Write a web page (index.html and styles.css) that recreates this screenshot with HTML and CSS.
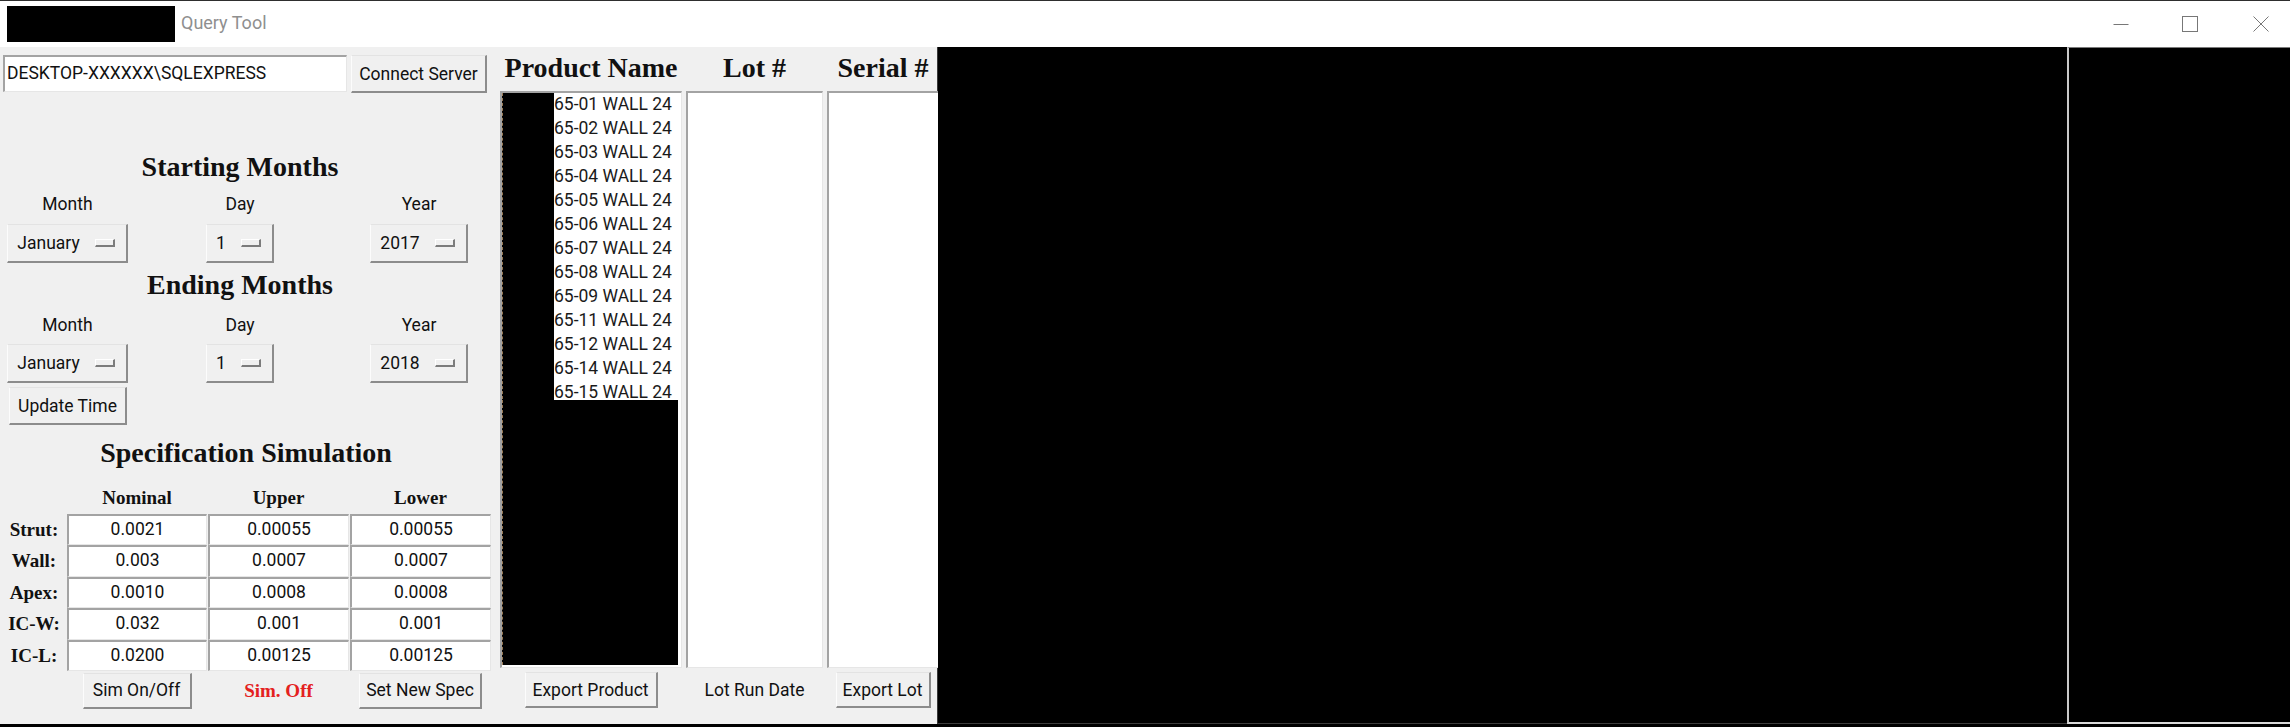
FILE: index.html
```html
<!DOCTYPE html>
<html lang="en">
<head>
<meta charset="utf-8">
<title>Query Tool</title>
<link rel="stylesheet" href="styles.css">
</head>
<body>
<div class="window">
  <header class="titlebar">
    <div class="redact-title"></div>
    <div class="title">Query Tool</div>
    <div class="controls">
      <div class="ctl"><svg width="16" height="16" viewBox="0 0 16 16"><path d="M0.5 8.5H15.5" stroke="#777" stroke-width="1" fill="none"/></svg></div>
      <div class="ctl"><svg width="16" height="16" viewBox="0 0 16 16"><rect x="0.5" y="0.5" width="15" height="15" stroke="#777" stroke-width="1" fill="none"/></svg></div>
      <div class="ctl ctl-close"><svg width="16" height="16" viewBox="0 0 16 16"><path d="M0.5 0.5L15.5 15.5M15.5 0.5L0.5 15.5" stroke="#777" stroke-width="1" fill="none"/></svg></div>
    </div>
  </header>

  <main class="main">
    <section class="left">
      <div class="server-row">
        <div class="field server-field">DESKTOP-XXXXXX\SQLEXPRESS</div>
        <div class="btn connect-btn">Connect Server</div>
      </div>

      <h2 class="heading heading-start">Starting Months</h2>
      <div class="dates">
        <div class="lbl">Month</div><div class="lbl">Day</div><div class="lbl">Year</div>
        <div class="opt"><span>January</span><i class="ind"></i></div>
        <div class="opt"><span>1</span><i class="ind"></i></div>
        <div class="opt"><span>2017</span><i class="ind"></i></div>
      </div>

      <h2 class="heading heading-end">Ending Months</h2>
      <div class="dates dates-end">
        <div class="lbl">Month</div><div class="lbl">Day</div><div class="lbl">Year</div>
        <div class="opt"><span>January</span><i class="ind"></i></div>
        <div class="opt"><span>1</span><i class="ind"></i></div>
        <div class="opt"><span>2018</span><i class="ind"></i></div>
      </div>
      <div class="btn update-btn">Update Time</div>

      <h2 class="heading heading-spec">Specification Simulation</h2>
      <div class="spec">
        <div></div><div class="colh">Nominal</div><div class="colh">Upper</div><div class="colh">Lower</div>
        <div class="rowh">Strut:</div><div class="field cell">0.0021</div><div class="field cell">0.00055</div><div class="field cell">0.00055</div>
        <div class="rowh">Wall:</div><div class="field cell">0.003</div><div class="field cell">0.0007</div><div class="field cell">0.0007</div>
        <div class="rowh">Apex:</div><div class="field cell">0.0010</div><div class="field cell">0.0008</div><div class="field cell">0.0008</div>
        <div class="rowh">IC-W:</div><div class="field cell">0.032</div><div class="field cell">0.001</div><div class="field cell">0.001</div>
        <div class="rowh">IC-L:</div><div class="field cell">0.0200</div><div class="field cell">0.00125</div><div class="field cell">0.00125</div>
        <div></div>
        <div class="cellc"><div class="btn sim-btn">Sim On/Off</div></div>
        <div class="cellc"><div class="sim-state">Sim. Off</div></div>
        <div class="cellc"><div class="btn sim-btn">Set New Spec</div></div>
      </div>
    </section>

    <section class="lists">
      <h2 class="lhead">Product Name</h2>
      <h2 class="lhead">Lot #</h2>
      <h2 class="lhead">Serial #</h2>

      <div class="field listbox product-box">
        <div class="items-row">
          <div class="redact redact-strip"></div>
          <ul class="items">
            <li>65-01 WALL 24</li>
            <li>65-02 WALL 24</li>
            <li>65-03 WALL 24</li>
            <li>65-04 WALL 24</li>
            <li>65-05 WALL 24</li>
            <li>65-06 WALL 24</li>
            <li>65-07 WALL 24</li>
            <li>65-08 WALL 24</li>
            <li>65-09 WALL 24</li>
            <li>65-11 WALL 24</li>
            <li>65-12 WALL 24</li>
            <li>65-14 WALL 24</li>
            <li>65-15 WALL 24</li>
          </ul>
        </div>
        <div class="redact redact-block"></div>
      </div>
      <div class="field listbox"></div>
      <div class="field listbox"></div>

      <div class="cellc"><div class="btn export-btn">Export Product</div></div>
      <div class="cellc"><div class="plain">Lot Run Date</div></div>
      <div class="cellc"><div class="btn export-btn">Export Lot</div></div>
    </section>

    <section class="canvas">
      <div class="canvas-main"></div>
      <div class="canvas-side"></div>
    </section>
  </main>
  <div class="bottom-edge"></div>
</div>
</body>
</html>
```
FILE: styles.css
```css
* { box-sizing: border-box; }
html, body { margin: 0; padding: 0; }
body {
  width: 2290px;
  height: 727px;
  overflow: hidden;
  background: #000;
  font-family: Roboto, "Liberation Sans", sans-serif;
  font-size: 17.5px;
  color: #000;
}
.window { width: 2290px; height: 727px; display: flex; flex-direction: column; }

/* title bar */
.titlebar {
  height: 47px;
  flex: 0 0 47px;
  background: #fff;
  border-top: 1px solid #2e2e2e;
  display: flex;
  align-items: flex-start;
}
.redact-title { width: 168px; height: 36px; margin: 5px 0 0 7px; background: #000; }
.title { margin: 10px 0 0 6px; font-size: 18px; line-height: 24px; color: #8f8f8f; }
.controls { margin-left: auto; display: flex; height: 46px; }
.ctl { width: 69px; height: 46px; display: flex; align-items: center; justify-content: center; padding-bottom: 1px; }
.ctl svg { display: block; }
.ctl-close { width: 66px; justify-content: flex-start; padding-left: 29px; }

/* main */
.main { flex: 0 0 677px; height: 677px; display: flex; }

/* common widgets */
.field {
  background: #fff;
  border-style: solid;
  border-width: 2px 1px 1px 2px;
  border-color: #a3a3a3 #e6e6e6 #e6e6e6 #a3a3a3;
}
.btn {
  display: flex;
  align-items: center;
  justify-content: center;
  background: #f0f0f0;
  border-style: solid;
  border-width: 1px 2px 2px 1px;
  border-color: #e3e3e3 #8c8c8c #8c8c8c #fcfcfc;
  white-space: nowrap;
  color: #111;
}
.cellc { display: flex; justify-content: center; align-items: flex-start; }

/* left panel */
.left {
  width: 497px;
  flex: 0 0 497px;
  background: #f0f0f0;
  display: flex;
  flex-direction: column;
}
.server-row { display: flex; gap: 4px; margin: 8px 0 0 3px; height: 38px; }
.server-field { width: 344px; height: 37px; padding-left: 2px; line-height: 33px; color: #111; white-space: nowrap; }
.connect-btn { width: 136px; height: 38px; }

.heading {
  margin: 0;
  font-family: "Liberation Serif", "Times New Roman", serif;
  font-weight: bold;
  font-size: 28px;
  line-height: 32px;
  text-align: center;
  color: #111;
}
.heading-start { margin-top: 58px; width: 480px; }
.heading-end { margin-top: 6px; width: 480px; }
.heading-spec { margin-top: 12px; width: 492px; }

.dates {
  display: grid;
  grid-template-columns: 135px 210px 148px;
  grid-template-rows: 24px 39px;
  row-gap: 8px;
  margin-top: 9px;
  justify-items: center;
}
.dates-end { margin-top: 12px; row-gap: 7px; }
.lbl { line-height: 24px; color: #111; }
.opt {
  display: flex;
  align-items: center;
  height: 39px;
  padding: 0 11px 0 9px;
  gap: 15px;
  background: #f0f0f0;
  border-style: solid;
  border-width: 1px 2px 2px 1px;
  border-color: #e3e3e3 #8c8c8c #8c8c8c #fcfcfc;
  color: #111;
}
.ind {
  display: block;
  width: 20px;
  height: 8px;
  background: #f0f0f0;
  border-style: solid;
  border-width: 1px 2px 2px 1px;
  border-color: #ffffff #7c7c7c #7c7c7c #ffffff;
}
.update-btn { width: 118px; height: 38px; margin: 4px 0 0 9px; }

.spec {
  display: grid;
  grid-template-columns: 64px 140px 141px 141px;
  grid-template-rows: 27px repeat(5, 31.4px) 38px;
  column-gap: 1px;
  margin-top: 18px;
  padding-left: 2px;
}
.colh, .rowh, .sim-state {
  font-family: "Liberation Serif", "Times New Roman", serif;
  font-weight: bold;
  font-size: 19px;
  color: #111;
}
.colh { text-align: center; line-height: 22px; }
.rowh { text-align: center; line-height: 31px; white-space: nowrap; }
.cell { text-align: center; line-height: 27px; color: #111; }
.sim-btn { height: 36px; margin-top: 2px; padding: 0 9px; }
.spec .cellc:nth-last-child(3) .sim-btn { width: 109px; }
.spec .cellc:nth-last-child(1) .sim-btn { width: 123px; }
.sim-state { color: #e42020; line-height: 36px; margin-top: 2px; }

/* lists panel */
.lists {
  width: 441px;
  flex: 0 0 441px;
  background: #f0f0f0;
  display: grid;
  grid-template-columns: 182px 137px 112px;
  grid-template-rows: 44px 577px 1fr;
  column-gap: 4px;
  padding-left: 3px;
  border-right: 1px solid #3a3a3a;
}
.lhead {
  margin: 5px 0 0;
  font-family: "Liberation Serif", "Times New Roman", serif;
  font-weight: bold;
  font-size: 28px;
  line-height: 32px;
  text-align: center;
  color: #111;
  white-space: nowrap;
}
.listbox { height: 577px; overflow: hidden; }
.product-box { display: flex; flex-direction: column; }
.items-row { display: flex; }
.redact { background: #000; border-left: 1px dashed #9b7b55; }
.redact-strip { width: 52px; flex: 0 0 52px; }
.items { list-style: none; margin: -1px 0 0; padding: 0; font-size: 17.5px; color: #1a1a1a; }
.items li { line-height: 24px; height: 24px; white-space: nowrap; }
.redact-block { width: 176px; height: 265px; margin-top: -4px; position: relative; }
.export-btn { height: 36px; margin-top: 4px; padding: 0 9px; }
.lists .cellc:nth-last-child(3) .export-btn { width: 133px; }
.lists .cellc:nth-last-child(1) .export-btn { width: 95px; }
.plain { line-height: 36px; margin-top: 4px; color: #111; }

/* black canvas */
.canvas { flex: 1; display: flex; background: #000; }
.canvas-main { flex: 1; border-bottom: 1px solid #3c3c3c; }
.canvas-side {
  width: 223px;
  flex: 0 0 223px;
  border-left: 2px solid #c9c9c9;
  border-top: 1px solid #7a7a7a;
  border-bottom: 2px solid #d9d9d9;
}
.bottom-edge { flex: 0 0 3px; background: #000; }
```
